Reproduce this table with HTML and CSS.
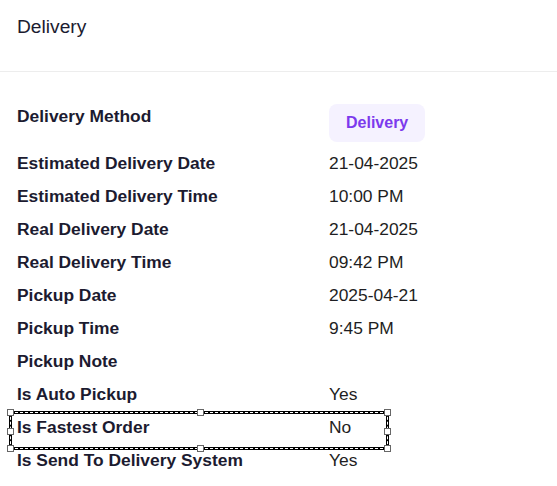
FILE: index.html
```html
<!DOCTYPE html>
<html>
<head>
<meta charset="utf-8">
<link rel="stylesheet" href="styles.css">
</head>
<body>
<div class="card">
  <div class="card-header"><h2 class="title">Delivery</h2></div>
  <div class="card-body">
    <div class="row"><div class="label">Delivery Method</div><div class="value"><span class="badge">Delivery</span></div></div>
    <div class="row"><div class="label">Estimated Delivery Date</div><div class="value">21-04-2025</div></div>
    <div class="row"><div class="label">Estimated Delivery Time</div><div class="value">10:00 PM</div></div>
    <div class="row"><div class="label">Real Delivery Date</div><div class="value">21-04-2025</div></div>
    <div class="row"><div class="label">Real Delivery Time</div><div class="value">09:42 PM</div></div>
    <div class="row"><div class="label">Pickup Date</div><div class="value">2025-04-21</div></div>
    <div class="row"><div class="label">Pickup Time</div><div class="value">9:45 PM</div></div>
    <div class="row"><div class="label">Pickup Note</div><div class="value"></div></div>
    <div class="row"><div class="label">Is Auto Pickup</div><div class="value">Yes</div></div>
    <div class="row selected"><div class="label">Is Fastest Order</div><div class="value">No</div>
      <div class="sel-box">
        <span class="handle h-tl"></span><span class="handle h-tm"></span><span class="handle h-tr"></span>
        <span class="handle h-ml"></span><span class="handle h-mr"></span>
        <span class="handle h-bl"></span><span class="handle h-bm"></span><span class="handle h-br"></span>
      </div>
    </div>
    <div class="row"><div class="label">Is Send To Delivery System</div><div class="value">Yes</div></div>
  </div>
</div>
</body>
</html>
```
FILE: styles.css
```css
html, body {
  margin: 0;
  padding: 0;
  background: #fff;
}
body {
  font-family: "Liberation Sans", Arial, sans-serif;
  color: #1c1b30;
}
.card-header {
  padding: 13px 17px 30px;
  border-bottom: 1px solid #ededed;
}
.title {
  margin: 0;
  font-size: 19.2px;
  line-height: 28px;
  font-weight: 400;
  color: #1c1b30;
}
.card-body {
  padding: 32px 0 0 17px;
  display: flex;
  flex-direction: column;
  gap: 9px;
}
.row {
  display: grid;
  grid-template-columns: 312px 1fr;
  align-items: start;
  font-size: 17.4px;
  line-height: 24px;
  position: relative;
}
.label {
  font-weight: 700;
  color: #1c1b30;
}
.value {
  color: #1e1e22;
}
.badge {
  display: inline-block;
  padding: 7px 17px;
  background: #f5f2ff;
  color: #7c3aed;
  font-size: 16px;
  font-weight: 700;
  border-radius: 8px;
}
.sel-box {
  position: absolute;
  left: -8px;
  top: -4px;
  width: 374px;
  height: 33px;
  border: 3px solid #000;
}
.sel-box::before {
  content: "";
  position: absolute;
  left: -2px;
  top: -2px;
  right: -2px;
  bottom: -2px;
  border: 1px dashed #fff;
}
.handle {
  position: absolute;
  width: 5px;
  height: 5px;
  background: #fff;
  border: 1px solid #666;
}
.h-tl { left: -5px; top: -5px; }
.h-tm { left: 185px; top: -5px; }
.h-tr { right: -5px; top: -5px; }
.h-ml { left: -5px; top: 14px; }
.h-mr { right: -5px; top: 14px; }
.h-bl { left: -5px; bottom: -5px; }
.h-bm { left: 185px; bottom: -5px; }
.h-br { right: -5px; bottom: -5px; }
```
